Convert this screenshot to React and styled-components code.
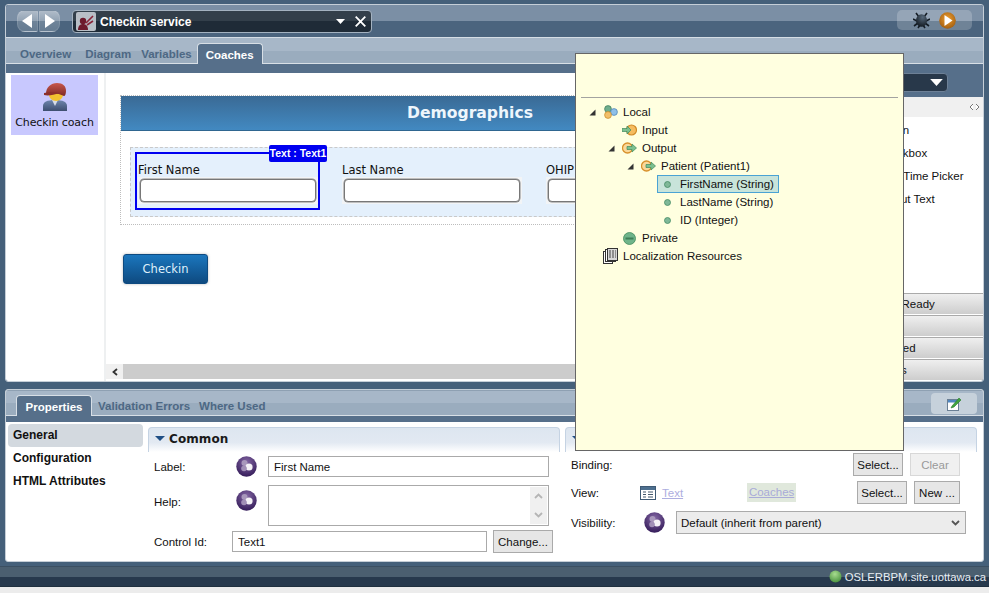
import React from "react";
import styled, { createGlobalStyle } from "styled-components";

const UI = '"Liberation Sans", Arial, sans-serif';
const COACH = '"DejaVu Sans", Verdana, sans-serif';

const Global = createGlobalStyle`
  html, body { margin: 0; padding: 0; background: #45607a; }
  * { box-sizing: border-box; }
`;

const Page = styled.div`
  position: relative;
  width: 989px;
  height: 596px;
  overflow: hidden;
  background: #45607a;
  font: 11.5px ${UI};
  color: #111;
  display: flex;
  flex-direction: column;
`;

const TopWindow = styled.section`
  margin: 4px 5px 0;
  height: 378px;
  border: 1px solid #c5ced7;
  border-radius: 3px;
  display: flex;
  flex-direction: column;
  overflow: hidden;
`;

const Header = styled.header`
  height: 32px;
  flex: none;
  display: flex;
  align-items: flex-start;
  padding: 5px 11px 0 11px;
  background: linear-gradient(#7b8fa5 0, #7b8fa5 50%, #4b647e 50%, #4b647e 100%);
`;

const NavGroup = styled.div`
  display: flex;
  gap: 1px;
  margin-right: 12px;
`;

const NavButton = styled.button`
  width: 21px;
  height: 22px;
  padding: 0;
  border: 1px solid rgba(255, 255, 255, 0.12);
  border-radius: ${(p) => (p.$right ? "2px 8px 8px 2px" : "8px 2px 2px 8px")};
  background: linear-gradient(#b0bcc9, #92a3b4 50%, #6f8499 50%, #667c92);
  display: flex;
  align-items: center;
  justify-content: center;
`;

const Combo = styled.div`
  width: 300px;
  height: 23px;
  display: flex;
  align-items: center;
  padding: 0 5px 0 3px;
  border: 1px solid #a4b2c0;
  border-radius: 4px;
  background: linear-gradient(#333f4a 0, #333f4a 50%, #1f2b37 50%, #1f2b37 100%);
  color: #fff;
  font: bold 12px ${UI};
`;

const ComboIcon = styled.span`
  width: 20px;
  height: 19px;
  background: #b9bfc6;
  border-radius: 2px;
  margin-right: 4px;
  display: flex;
  align-items: center;
  justify-content: center;
`;

const ComboTitle = styled.span`
  flex: 1;
`;

const Caret = styled.svg`
  flex: none;
  display: block;
  margin-right: ${(p) => p.$mr || 0}px;
`;

const RunGroup = styled.div`
  margin-left: auto;
  width: 75px;
  height: 20px;
  border-radius: 5px;
  background: rgba(255, 255, 255, 0.2);
  display: flex;
  align-items: center;
  padding-left: 16px;
  gap: 9px;
`;

const TabStrip = styled.nav`
  flex: none;
  height: ${(p) => p.$h}px;
  display: flex;
  align-items: flex-end;
  padding-left: ${(p) => p.$pl}px;
  border-top: 1px solid ${(p) => (p.$lit ? "#d5dde5" : "#8ea0b2")};
  border-bottom: 1px solid #d8dfe6;
  background: linear-gradient(#a7b7c8 0, #a7b7c8 50%, #9aacbe 50%, #9aacbe 100%);
  font: bold 11.5px ${UI};
`;

const Tab = styled.span`
  height: ${(p) => (p.$active ? "21px" : "20px")};
  line-height: 23px;
  padding: 0 ${(p) => (p.$active ? "8px" : "0")};
  margin-right: ${(p) => p.$mr}px;
  color: ${(p) => (p.$active ? "#fff" : "#4d6884")};
  ${(p) =>
    p.$active &&
    `background:#566f8a;border:1px solid #d8dfe6;border-bottom:none;border-radius:4px 4px 0 0;margin-bottom:-1px;min-width:64px;text-align:center;`}
`;

const Body = styled.div`
  flex: 1;
  min-height: 0;
  display: flex;
  background: #566f8a;
`;

const Main = styled.div`
  width: 844px;
  margin-top: 9px;
  background: #fff;
  display: flex;
`;

const CoachList = styled.aside`
  width: 98px;
  flex: none;
  padding: 2px 6px 0 5px;
`;

const CoachItem = styled.div`
  height: 60px;
  background: #c8c8fe;
  display: flex;
  flex-direction: column;
  align-items: center;
  padding-top: 7px;
  font: 11px ${COACH};
  letter-spacing: -0.1px;
  color: #111;
  white-space: nowrap;
`;

const CoachLabel = styled.span`
  margin-top: 4px;
`;

const Divider = styled.div`
  width: 2px;
  flex: none;
  background: #eef0f1;
`;

const CanvasColumn = styled.div`
  flex: 1;
  min-width: 0;
  display: flex;
  flex-direction: column;
  padding-bottom: 2px;
`;

const Canvas = styled.div`
  flex: 1;
  min-height: 0;
  overflow: hidden;
  padding: 22px 0 0 14px;
`;

const DemoPanel = styled.div`
  width: 700px;
  height: 130px;
  border: 1px dotted #bdbdbd;
`;

const DemoHeader = styled.div`
  height: 35px;
  background: linear-gradient(#3a6a95, #4289c1);
  border-bottom: 1px solid #2f6690;
  color: #eef6fc;
  font: bold 15.6px ${COACH};
  text-align: center;
  line-height: 34px;
`;

const FieldBox = styled.div`
  margin: 16px 8px 0 9px;
  height: 70px;
  padding: 4px;
  background: #e4f0fc;
  border: 1px dashed #c9c9c9;
  display: flex;
  gap: 19px;
`;

const Field = styled.div`
  position: relative;
  width: 185px;
  height: 58px;
  flex: none;
  border: 2px solid ${(p) => (p.$selected ? "#0000f0" : "transparent")};
  padding: 8px 0 0 1px;
  font: 11.5px ${COACH};
`;

const FieldLabel = styled.div`
  height: 16px;
  line-height: 16px;
`;

const FieldInput = styled.div`
  width: 180px;
  height: 27px;
  margin-top: -1px;
  border: 2px solid #f2f4f6;
  background: #f2f4f6;
`;

const FieldInner = styled.div`
  height: 100%;
  background: #fff;
  border: 1px solid #777;
  border-radius: 4px;
  box-shadow: 0 0 0 0.5px #888;
`;

const Badge = styled.span`
  position: absolute;
  top: -9px;
  right: -9px;
  height: 17px;
  width: 58px;
  background: #0000f0;
  color: #fff;
  border-radius: 2px;
  font: bold 10.5px ${UI};
  line-height: 17px;
  text-align: center;
  white-space: nowrap;
`;

const Primary = styled.button`
  display: block;
  width: 85px;
  height: 30px;
  margin: 29px 0 0 3px;
  border: 1px solid #0e4a80;
  border-radius: 3px;
  background: linear-gradient(#1b76bd, #0e4a80);
  color: #dff0fb;
  font: 11.5px ${COACH};
  box-shadow: 0 0 3px #bbb;
`;

const HScroll = styled.div`
  height: 15px;
  flex: none;
  display: flex;
  background: #ccc;
`;

const ScrollArrow = styled.div`
  width: 17px;
  flex: none;
  background: #f0f0f0;
  display: flex;
  align-items: center;
  justify-content: center;
`;

const Palette = styled.aside`
  flex: 1;
  min-width: 0;
  display: flex;
  flex-direction: column;
`;

const PaletteBand = styled.div`
  height: 33px;
  flex: none;
  padding: 9px 35px 0 0;
`;

const PaletteSelect = styled.div`
  height: 19px;
  background: #28384a;
  border: 1px solid #6d8096;
  border-radius: 4px;
  display: flex;
  align-items: center;
  justify-content: flex-end;
  padding-right: 4px;
`;

const PaletteHead = styled.div`
  height: 20px;
  flex: none;
  background: #f0f0f0;
  display: flex;
  align-items: center;
  justify-content: flex-end;
  padding-right: 3px;
`;

const PaletteItems = styled.ul`
  flex: 1;
  margin: 0;
  padding: 2px 0 0 26px;
  list-style: none;
  background: #fff;
`;

const PaletteItem = styled.li`
  height: 23px;
  line-height: 23px;
  white-space: nowrap;
`;

const Accordion = styled.div`
  height: 22px;
  flex: none;
  padding-left: 33px;
  line-height: 21px;
  background: linear-gradient(#efefef, #cdcdcd);
  border-top: 1px solid #aaa;
  border-bottom: 1px solid #fff;
  white-space: nowrap;
`;

const BottomWindow = styled.section`
  margin: 7px 5px 0;
  height: 173px;
  border: 1px solid #c5ced7;
  border-radius: 3px;
  display: flex;
  flex-direction: column;
  background: #fff;
  overflow: hidden;
`;

const EditButton = styled.span`
  position: absolute;
  top: 3px;
  right: 6px;
  width: 46px;
  height: 21px;
  border-radius: 4px;
  background: #c6d1db;
  display: flex;
  align-items: center;
  justify-content: center;
`;

const StripWrap = styled.div`
  position: relative;
  flex: none;
`;

const Band = styled.div`
  height: 6px;
  flex: none;
  background: #566f8a;
`;

const PropsBody = styled.div`
  flex: 1;
  min-height: 0;
  display: flex;
  gap: 5px;
  padding: 2px 6px 0 2px;
`;

const SideNav = styled.ul`
  width: 135px;
  flex: none;
  margin: 0;
  padding: 0;
  list-style: none;
  font: bold 12px ${UI};
`;

const SideItem = styled.li`
  height: 23px;
  line-height: 22px;
  padding-left: 5px;
  border-radius: 4px;
  background: ${(p) => (p.$active ? "#d3d9df" : "transparent")};
`;

const Section = styled.div`
  width: 412px;
  flex: none;
  display: flex;
  flex-direction: column;
`;

const SectionHead = styled.div`
  height: 25px;
  margin-top: 3px;
  flex: none;
  display: flex;
  align-items: center;
  padding: 0 0 3px 6px;
  gap: 4px;
  border: 1px solid #c5d3e3;
  border-bottom: none;
  border-radius: 4px 4px 0 0;
  background: linear-gradient(#dde6f0 0, #e2e9f2 60%, #fff 100%);
  font: bold 12px ${COACH};
  letter-spacing: 0.1px;
  color: #1a1a1a;
`;

const FormRow = styled.div`
  display: flex;
  align-items: ${(p) => p.$align || "center"};
  height: ${(p) => p.$h}px;
  margin-top: ${(p) => p.$mt}px;
  padding: 0 ${(p) => p.$pr || 0}px 0 6px;
`;

const RowLabel = styled.span`
  width: ${(p) => p.$w}px;
  flex: none;
  margin-top: ${(p) => p.$mt || 0}px;
`;

const Ball = styled.svg`
  width: 21px;
  height: 21px;
  flex: none;
  display: block;
  margin-right: ${(p) => p.$mr}px;
  margin-top: ${(p) => p.$mt || 0}px;
`;

const TextBox = styled.input`
  height: ${(p) => p.$h || 21}px;
  width: ${(p) => p.$w}px;
  flex: none;
  border: 1px solid #aaa;
  background: #fff;
  padding: 0 5px;
  font: 11.5px ${UI};
  color: #111;
  outline: none;
`;

const TextArea = styled.div`
  width: 281px;
  height: 41px;
  flex: none;
  border: 1px solid #aaa;
  padding: 1px;
  display: flex;
  justify-content: flex-end;
`;

const AreaScroll = styled.div`
  width: 17px;
  background: #f0f0f0;
  display: flex;
  flex-direction: column;
  align-items: center;
  justify-content: space-between;
  padding: 6px 0;
`;

const Btn = styled.button`
  height: 23px;
  width: ${(p) => p.$w}px;
  flex: none;
  padding: 0;
  margin-left: ${(p) => (p.$push ? "auto" : `${p.$ml || 0}px`)};
  border: 1px solid ${(p) => (p.disabled ? "#d8d8d8" : "#aaa")};
  background: ${(p) => (p.disabled ? "#f0f0f0" : "#e6e6e6")};
  color: ${(p) => (p.disabled ? "#999" : "#111")};
  font: 11.5px ${UI};
`;

const LinkText = styled.span`
  color: #adaee0;
  text-decoration: underline;
  margin-left: 6px;
`;

const CoachLink = styled.span`
  margin-left: 64px;
  margin-right: auto;
  width: 49px;
  height: 19px;
  line-height: 18px;
  text-align: center;
  background: #e0e8dc;
  color: #a9abd8;
  text-decoration: underline;
`;

const FakeSelect = styled.div`
  width: 290px;
  height: 23px;
  flex: none;
  border: 1px solid #aaa;
  background: #ececec;
  display: flex;
  align-items: center;
  justify-content: space-between;
  padding: 0 5px 0 4px;
`;

const StatusBar = styled.footer`
  margin-top: 4px;
  height: 20px;
  flex: none;
  background: linear-gradient(#4b5f70 0, #4b5f70 50%, #27394d 50%, #27394d 100%);
  border-top: 1px solid #3b4f62;
  display: flex;
  align-items: center;
  justify-content: flex-end;
  padding-right: 3px;
  gap: 3px;
  color: #e8eef4;
  font-size: 11.3px;
`;

const PageEdge = styled.div`
  flex: 1;
  background: #ececec;
  border-bottom: 3px solid #fff;
  border-top: 1px solid #20303f;
`;

const Popup = styled.div`
  position: absolute;
  left: 575px;
  top: 53px;
  width: 329px;
  height: 398px;
  background: #ffffe0;
  border: 1px solid #666;
  padding: 43px 5px 0 5px;
`;

const PopupRule = styled.div`
  height: 1px;
  background: #a3a3a0;
`;

const Tree = styled.ul`
  list-style: none;
  margin: 5px 0 0;
  padding: 0 0 0 6px;
`;

const TreeRow = styled.li`
  height: 18px;
  display: flex;
  align-items: center;
  padding-left: ${(p) => p.$level * 19}px;
`;

const Twistie = styled.span`
  width: 14px;
  flex: none;
  display: flex;
  padding-left: 2px;
`;

const TreeNode = styled.span`
  display: inline-flex;
  align-items: center;
  height: 18px;
  margin-left: -1px;
  padding-right: 4px;
  border: 1px solid ${(p) => (p.$selected ? "#4aa3d4" : "transparent")};
  background: ${(p) => (p.$selected ? "#c8e4da" : "transparent")};
  white-space: nowrap;
`;

const NodeIcon = styled.span`
  width: 18px;
  margin-right: 4px;
  display: flex;
  justify-content: center;
`;

/* ---------- drawings ---------- */
const TriLeft = () => (
  <svg width="11" height="14" viewBox="0 0 11 14"><path d="M10 0v14L0 7z" fill="#fff" /></svg>
);
const TriRight = () => (
  <svg width="11" height="14" viewBox="0 0 11 14"><path d="M1 0v14l10-7z" fill="#fff" /></svg>
);
const Close = () => (
  <Caret width="11" height="11" viewBox="0 0 11 11">
    <path d="M.7.700l9.600 9.600M10.300.700L.7 10.300" stroke="#fff" strokeWidth="1.800" />
  </Caret>
);
const DownWhite = ({ mr, w = 9, h = 5 }) => (
  <Caret $mr={mr} width={w} height={h} viewBox="0 0 9 5"><path d="M0 0h9L4.500 5z" fill="#fff" /></Caret>
);
const ServiceIcon = () => (
  <svg width="18" height="16" viewBox="0 0 18 16">
    <path d="M1 16c0-4 2-6 5-6s5 2 5 6z" fill="#6d1a2c" />
    <circle cx="6" cy="7" r="3.200" fill="#6d1a2c" />
    <path d="M9 9l7-7M10 11l6-4" stroke="#8a2438" strokeWidth="1.600" />
  </svg>
);
const Bug = () => (
  <svg width="17" height="17" viewBox="0 0 17 17">
    <defs>
      <radialGradient id="bugG" cx="0.6" cy="0.25" r="0.85">
        <stop offset="0" stopColor="#56687a" />
        <stop offset="1" stopColor="#0c1218" />
      </radialGradient>
    </defs>
    <path d="M3 1l3 4M14 1l-3 4M0 7l4 2M17 7l-4 2M1 14l4-3M16 14l-4-3M5 16l2-3M12 16l-2-3" stroke="#141c24" strokeWidth="1.600" />
    <ellipse cx="8.500" cy="8.500" rx="5.500" ry="6.300" fill="url(#bugG)" />
  </svg>
);
const Play = () => (
  <svg width="17" height="17" viewBox="0 0 17 17">
    <defs>
      <radialGradient id="playG" cx="0.5" cy="0.4" r="0.7">
        <stop offset="0" stopColor="#f0a030" />
        <stop offset="1" stopColor="#96540c" />
      </radialGradient>
    </defs>
    <circle cx="8.500" cy="8.500" r="8.300" fill="url(#playG)" />
    <path d="M5.500 3l8 5.500-8 5.500z" fill="#fff" />
  </svg>
);
const Person = () => (
  <svg width="26" height="30" viewBox="0 0 26 30">
    <defs>
      <linearGradient id="coat" x1="0" y1="0" x2="0" y2="1">
        <stop offset="0" stopColor="#6f86ad" />
        <stop offset="1" stopColor="#3d4e70" />
      </linearGradient>
      <linearGradient id="cap" x1="0" y1="0" x2="0" y2="1">
        <stop offset="0" stopColor="#c8584c" />
        <stop offset="1" stopColor="#7e2a26" />
      </linearGradient>
    </defs>
    <path d="M1 29v-5c0-4 4-6 12-6s12 2 12 6v5z" fill="url(#coat)" />
    <path d="M10 18l3 6 3-6z" fill="#d5dbe8" />
    <ellipse cx="14" cy="13" rx="7" ry="6" fill="#f2c230" />
    <path d="M4 12C4 5 9 1 15 1s9 3 9 8c0 3-1 5-2 5-5-3-12-3-18-2z" fill="url(#cap)" />
    <path d="M2 11c4-1 10-1 15 0-5 2-11 3-15 2z" fill="#8c2f2a" />
  </svg>
);
const PurpleBall = ({ mr, mt }) => (
  <Ball $mr={mr} $mt={mt} viewBox="0 0 21 21">
    <defs>
      <radialGradient id="pb" cx="0.5" cy="0.3" r="0.8">
        <stop offset="0" stopColor="#8467a4" />
        <stop offset="1" stopColor="#2a1250" />
      </radialGradient>
    </defs>
    <circle cx="10.500" cy="10.500" r="10.200" fill="url(#pb)" />
    <circle cx="8.500" cy="7" r="3" fill="#a897bb" />
    <circle cx="13" cy="11" r="3.600" fill="#f4f1f6" />
    <circle cx="8" cy="12.500" r="2.800" fill="#a18fb6" />
  </Ball>
);
const Tw = () => (
  <svg width="7" height="7" viewBox="0 0 7 7"><path d="M6.500 0.500v6h-6z" fill="#333" /></svg>
);
const LocalIcon = () => (
  <svg width="15" height="14" viewBox="0 0 15 14">
    <circle cx="5" cy="4" r="3.400" fill="#6fae8c" stroke="#3c7a5c" strokeWidth=".7" />
    <circle cx="11" cy="7" r="3.400" fill="#8fc0e8" stroke="#4a80b0" strokeWidth=".7" />
    <circle cx="5" cy="10" r="3.400" fill="#f3c069" stroke="#c98a25" strokeWidth=".7" />
  </svg>
);
const InputIcon = () => (
  <svg width="15" height="12" viewBox="0 0 15 12">
    <circle cx="9.500" cy="6" r="5" fill="#f5bc60" stroke="#d08a28" strokeWidth="1.200" />
    <path d="M0 4.500h5V2l4 4-4 4V7.500H0z" fill="#7cc08f" stroke="#3f8a5c" strokeWidth=".7" />
  </svg>
);
const OutputIcon = () => (
  <svg width="15" height="12" viewBox="0 0 15 12">
    <circle cx="5.500" cy="6" r="5" fill="#fad899" stroke="#d8902a" strokeWidth="1.300" />
    <path d="M5 4.500h5V2l4.500 4-4.500 4V7.500H5z" fill="#7cc08f" stroke="#3f8a5c" strokeWidth=".7" />
  </svg>
);
const PrivateIcon = () => (
  <svg width="13" height="13" viewBox="0 0 13 13">
    <circle cx="6.500" cy="6.500" r="6" fill="#6fb48a" stroke="#3f8a5c" strokeWidth=".8" />
    <rect x="2.500" y="5.500" width="8" height="2" fill="#3f7f58" />
  </svg>
);
const FieldDot = () => (
  <svg width="7" height="7" viewBox="0 0 7 7">
    <circle cx="3.500" cy="3.500" r="3" fill="#7fb898" stroke="#458a64" strokeWidth=".8" />
  </svg>
);
const DocsIcon = () => (
  <svg width="15" height="16" viewBox="0 0 15 16">
    <rect x="0.500" y="3.500" width="9" height="12" fill="#fff" stroke="#333" />
    <rect x="2.500" y="1.500" width="10" height="12" fill="#fff" stroke="#333" />
    <rect x="4.500" y="0.500" width="10" height="12" fill="#d8d8d8" stroke="#333" />
    <path d="M6 3h7M6 5h7M6 7h7M6 9h7" stroke="#444" strokeDasharray="2 1" />
  </svg>
);
const Chevron = ({ up, color = "#b5b5b5" }) => (
  <svg width="9" height="6" viewBox="0 0 9 6">
    <path d={up ? "M1 5l3.500-3.500L8 5" : "M1 1l3.500 3.500L8 1"} fill="none" stroke={color} strokeWidth="1.800" />
  </svg>
);
const ViewIcon = () => (
  <svg width="16" height="14" viewBox="0 0 16 14">
    <rect x="0.500" y="0.500" width="15" height="13" fill="#fff" stroke="#3f5a75" />
    <rect x="1" y="1" width="14" height="3" fill="#4d6f8f" />
    <path d="M3 6h3M8 6h5M3 8.500h3M8 8.500h5M3 11h3M8 11h5" stroke="#44586c" />
  </svg>
);
const EditIcon = () => (
  <svg width="15" height="15" viewBox="0 0 15 15">
    <rect x="0.500" y="3.500" width="11" height="11" fill="#fff" stroke="#6a7f94" />
    <rect x="1" y="4" width="10" height="2.500" fill="#4f86c0" />
    <path d="M5 10l7-8 2 2-7 7-3 1z" fill="#3fa33f" stroke="#2a7a2a" strokeWidth=".6" />
  </svg>
);
const Grip = () => (
  <svg width="11" height="8" viewBox="0 0 11 8">
    <path d="M4 1L1 4l3 3M7 1l3 3-3 3" fill="#fff" stroke="#777" />
  </svg>
);
const Dot = () => (
  <svg width="13" height="13" viewBox="0 0 13 13">
    <defs>
      <radialGradient id="stat" cx="0.45" cy="0.3" r="0.8">
        <stop offset="0" stopColor="#a8dc90" />
        <stop offset="1" stopColor="#3f8a35" />
      </radialGradient>
    </defs>
    <circle cx="6.500" cy="6.500" r="6" fill="url(#stat)" />
  </svg>
);
const SectionTri = () => (
  <svg width="10" height="5" viewBox="0 0 10 5"><path d="M0 0h10L5 5z" fill="#1f4f86" /></svg>
);
const ScrollLeft = () => (
  <svg width="6" height="8" viewBox="0 0 6 8"><path d="M5 1L1.500 4 5 7" fill="none" stroke="#333" strokeWidth="1.800" /></svg>
);

const treeRows = [
  { level: 0, tw: true, icon: <LocalIcon />, text: "Local" },
  { level: 1, icon: <InputIcon />, text: "Input" },
  { level: 1, tw: true, icon: <OutputIcon />, text: "Output" },
  { level: 2, tw: true, icon: <OutputIcon />, text: "Patient (Patient1)" },
  { level: 3, icon: <FieldDot />, text: "FirstName (String)", selected: true },
  { level: 3, icon: <FieldDot />, text: "LastName (String)" },
  { level: 3, icon: <FieldDot />, text: "ID (Integer)" },
  { level: 1, icon: <PrivateIcon />, text: "Private" },
  { level: 0, icon: <DocsIcon />, text: "Localization Resources" },
];

export default function App() {
  return (
    <Page>
      <Global />
      <TopWindow>
        <Header>
          <NavGroup>
            <NavButton><TriLeft /></NavButton>
            <NavButton $right><TriRight /></NavButton>
          </NavGroup>
          <Combo>
            <ComboIcon><ServiceIcon /></ComboIcon>
            <ComboTitle>Checkin service</ComboTitle>
            <DownWhite mr={10} />
            <Close />
          </Combo>
          <RunGroup>
            <Bug />
            <Play />
          </RunGroup>
        </Header>
        <TabStrip $h={27} $pl={14} $lit>
          <Tab $mr={14}>Overview</Tab>
          <Tab $mr={10}>Diagram</Tab>
          <Tab $mr={5}>Variables</Tab>
          <Tab $active $mr={0}>Coaches</Tab>
        </TabStrip>
        <Body>
          <Main>
            <CoachList>
              <CoachItem>
                <Person />
                <CoachLabel>Checkin coach</CoachLabel>
              </CoachItem>
            </CoachList>
            <Divider />
            <CanvasColumn>
              <Canvas>
                <DemoPanel>
                  <DemoHeader>Demographics</DemoHeader>
                  <FieldBox>
                    <Field $selected>
                      <Badge>Text : Text1</Badge>
                      <FieldLabel>First Name</FieldLabel>
                      <FieldInput><FieldInner /></FieldInput>
                    </Field>
                    <Field>
                      <FieldLabel>Last Name</FieldLabel>
                      <FieldInput><FieldInner /></FieldInput>
                    </Field>
                    <Field>
                      <FieldLabel>OHIP</FieldLabel>
                      <FieldInput><FieldInner /></FieldInput>
                    </Field>
                  </FieldBox>
                </DemoPanel>
                <Primary>Checkin</Primary>
              </Canvas>
              <HScroll>
                <ScrollArrow><ScrollLeft /></ScrollArrow>
              </HScroll>
            </CanvasColumn>
          </Main>
          <Palette>
            <PaletteBand>
              <PaletteSelect><DownWhite w={13} h={7} /></PaletteSelect>
            </PaletteBand>
            <PaletteHead><Grip /></PaletteHead>
            <PaletteItems>
              <PaletteItem>Button</PaletteItem>
              <PaletteItem>Checkbox</PaletteItem>
              <PaletteItem>Date Time Picker</PaletteItem>
              <PaletteItem>Output Text</PaletteItem>
            </PaletteItems>
            <Accordion>On Ready</Accordion>
            <Accordion />
            <Accordion>Saved</Accordion>
            <Accordion>Lists</Accordion>
          </Palette>
        </Body>
      </TopWindow>

      <BottomWindow>
        <StripWrap>
          <TabStrip $h={26} $pl={10}>
            <Tab $active $mr={6} style={{ minWidth: 76 }}>Properties</Tab>
            <Tab $mr={9}>Validation Errors</Tab>
            <Tab $mr={0}>Where Used</Tab>
          </TabStrip>
          <EditButton><EditIcon /></EditButton>
        </StripWrap>
        <Band />
        <PropsBody>
          <SideNav>
            <SideItem $active>General</SideItem>
            <SideItem>Configuration</SideItem>
            <SideItem>HTML Attributes</SideItem>
          </SideNav>
          <Section>
            <SectionHead><SectionTri />Common</SectionHead>
            <FormRow $h={21} $mt={4}>
              <RowLabel $w={82}>Label:</RowLabel>
              <PurpleBall mr={11} />
              <TextBox $w={281} readOnly value="First Name" />
            </FormRow>
            <FormRow $h={41} $mt={8} $align="flex-start">
              <RowLabel $w={82} $mt={11}>Help:</RowLabel>
              <PurpleBall mr={11} mt={5} />
              <TextArea>
                <AreaScroll>
                  <Chevron up />
                  <Chevron />
                </AreaScroll>
              </TextArea>
            </FormRow>
            <FormRow $h={23} $mt={4}>
              <RowLabel $w={78}>Control Id:</RowLabel>
              <TextBox $w={255} readOnly value="Text1" />
              <Btn $w={60} $ml={6}>Change...</Btn>
            </FormRow>
          </Section>
          <Section>
            <SectionHead><SectionTri />Behavior</SectionHead>
            <FormRow $h={23} $mt={1} $pr={17}>
              <span>Binding:</span>
              <Btn $w={50} $push>Select...</Btn>
              <Btn $w={50} $ml={7} disabled>Clear</Btn>
            </FormRow>
            <FormRow $h={23} $mt={5} $pr={17}>
              <RowLabel $w={69}>View:</RowLabel>
              <ViewIcon />
              <LinkText>Text</LinkText>
              <CoachLink>Coaches</CoachLink>
              <Btn $w={50}>Select...</Btn>
              <Btn $w={46} $ml={7}>New ...</Btn>
            </FormRow>
            <FormRow $h={23} $mt={7} $pr={11}>
              <RowLabel $w={73}>Visibility:</RowLabel>
              <PurpleBall mr={11} />
              <FakeSelect>
                Default (inherit from parent)
                <Chevron color="#555" />
              </FakeSelect>
            </FormRow>
          </Section>
        </PropsBody>
      </BottomWindow>

      <StatusBar>
        <Dot />
        OSLERBPM.site.uottawa.ca
      </StatusBar>
      <PageEdge />

      <Popup>
        <PopupRule />
        <Tree>
          {treeRows.map((r) => (
            <TreeRow key={r.text} $level={r.level}>
              <Twistie>{r.tw && <Tw />}</Twistie>
              <TreeNode $selected={r.selected}>
                <NodeIcon>{r.icon}</NodeIcon>
                {r.text}
              </TreeNode>
            </TreeRow>
          ))}
        </Tree>
      </Popup>
    </Page>
  );
}
